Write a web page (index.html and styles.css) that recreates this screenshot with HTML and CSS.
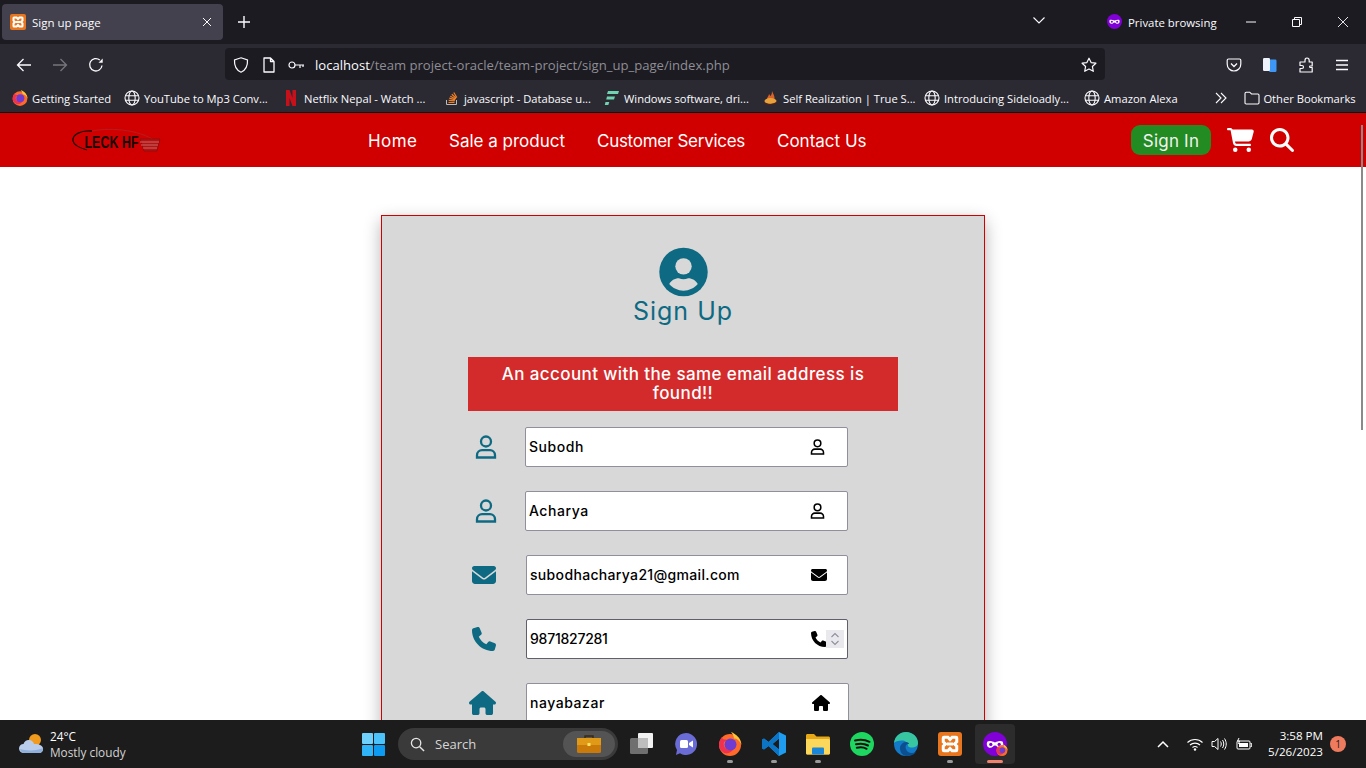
FILE: index.html
```html
<!DOCTYPE html>
<html lang="en">
<head>
<meta charset="utf-8">
<title>Sign up page</title>
<link rel="stylesheet" href="styles.css">
</head>
<body>
<svg class="defs" aria-hidden="true">
  <symbol id="xampp" viewBox="0 0 16 16"><rect width="16" height="16" rx="2" fill="#e8761f"/><path d="M4 3.500h2.600L8 5l1.400-1.500H12a.5.5 0 0 1 .5.5v2.600L11 8l1.500 1.400V12a.5.5 0 0 1-.5.5H9.400L8 11l-1.400 1.500H4a.5.5 0 0 1-.5-.5V9.400L5 8 3.500 6.600V4a.5.5 0 0 1 .5-.5zM6 8h4" fill="none" stroke="#fff" stroke-width="2"/></symbol>
  <symbol id="globe" viewBox="0 0 16 16"><g fill="none" stroke="#fbfbfe" stroke-width="1.100"><circle cx="8" cy="8" r="7"/><ellipse cx="8" cy="8" rx="3.200" ry="7"/><path d="M1.300 5.800h13.400M1.300 10.200h13.400"/></g></symbol>
  <symbol id="firefox" viewBox="0 0 24 24"><circle cx="12" cy="13" r="11" fill="#ff6a2b"/><path d="M13 0c5 2 10 6 10.500 13-2-5-5-6.500-7.500-6.500C16 4 14.500 2 13 0z" fill="#ffc33a"/><path d="M1 13c0-3 1-6 3-8 0 3 3 2 5 3-3 1-4 3-3 6 1 4 7 5 10 2-2 5-8 7-11 4-3-2-4-4-4-7z" fill="#f0324f"/><circle cx="12.500" cy="12.500" r="6" fill="#6f3bd1"/></symbol>
  <symbol id="mask" viewBox="0 0 16 16"><circle cx="8" cy="8" r="8" fill="#8000d7"/><path d="M2.800 6.500c1.400-.8 3-.4 5.200.5 2.200-.9 3.800-1.300 5.200-.5 .8 2.200-.2 4-2 4-1.500 0-2-1.500-3.200-1.500S6.300 10.500 4.800 10.500c-1.800 0-2.800-1.800-2-4z" fill="#fff"/><circle cx="5.200" cy="8.300" r="1.100" fill="#8000d7"/><circle cx="10.800" cy="8.300" r="1.100" fill="#8000d7"/></symbol>
  <symbol id="user-o" viewBox="0 0 22 24"><g fill="none" stroke="currentColor" stroke-width="2.300"><circle cx="11" cy="6.500" r="5"/><path d="M2 22.500v-2.300c0-3 2.500-5 5-5h8c2.500 0 5 2 5 5v2.300z"/></g></symbol>
  <symbol id="envelope" viewBox="0 0 512 512"><path fill="currentColor" d="M48 64C21.500 64 0 85.500 0 112c0 15.100 7.100 29.300 19.200 38.400L236.800 313.600c11.400 8.500 27 8.500 38.400 0L492.800 150.400c12.100-9.100 19.200-23.300 19.200-38.400c0-26.500-21.500-48-48-48H48zM0 176V384c0 35.300 28.700 64 64 64H448c35.300 0 64-28.700 64-64V176L294.400 339.200c-22.800 17.100-54 17.100-76.800 0L0 176z"/></symbol>
  <symbol id="phone" viewBox="0 0 512 512"><path fill="currentColor" d="M164.900 24.600c-7.700-18.600-28-28.500-47.400-23.200l-88 24C12.100 30.200 0 46 0 64C0 311.400 200.600 512 448 512c18 0 33.800-12.100 38.600-29.500l24-88c5.300-19.400-4.600-39.700-23.200-47.400l-96-40c-16.300-6.800-35.200-2.100-46.300 11.600L304.700 368C234.300 334.700 177.300 277.700 144 207.300L193.300 167c13.700-11.200 18.400-30 11.600-46.300l-40-96z"/></symbol>
  <symbol id="home" viewBox="0 0 576 512"><path fill="currentColor" d="M575.800 255.500c0 18-15 32.100-32 32.100h-32l.7 160.200c0 2.700-.2 5.400-.5 8.100V472c0 22.100-17.900 40-40 40H456c-1.100 0-2.200 0-3.300-.1c-1.400 .1-2.800 .1-4.200 .1H416 392c-22.100 0-40-17.900-40-40V448 384c0-17.700-14.300-32-32-32H256c-17.700 0-32 14.300-32 32v64 24c0 22.100-17.900 40-40 40H160 128.100c-1.500 0-3-.1-4.500-.2c-1.200 .1-2.400 .2-3.600 .2H104c-22.100 0-40-17.900-40-40V360c0-.9 0-1.900 .1-2.800V287.600H32c-18 0-32-14-32-32.100c0-9 3-17 10-24L266.400 8c7-7 15-8 22-8s15 2 21 7L564.800 231.500c8 7 12 15 11 24z"/></symbol>
</svg>

<header class="chrome">
  <div class="tabbar">
    <div class="tab">
      <svg class="ic16"><use href="#xampp"/></svg>
      <span class="tab-title">Sign up page</span>
      <svg class="tab-close" viewBox="0 0 10 10"><path d="M1 1l8 8M9 1l-8 8" stroke="#fbfbfe" fill="none"/></svg>
    </div>
    <svg class="tab-new" viewBox="0 0 12 12"><path d="M6 0v12M0 6h12" stroke="#fbfbfe" stroke-width="1.400"/></svg>
    <svg class="tab-list" viewBox="0 0 12 7"><path d="M.5.500L6 6 11.500.500" stroke="#fbfbfe" stroke-width="1.100" fill="none"/></svg>
    <svg class="ic16 priv-ic"><use href="#mask"/></svg>
    <span class="priv-label">Private browsing</span>
    <svg class="win-btn win-min" viewBox="0 0 10 10"><path d="M0 5h10" stroke="#fbfbfe"/></svg>
    <svg class="win-btn win-max" viewBox="0 0 10 10"><path d="M.5 2.500h7v7h-7zM2.500 2.500v-2h7v7h-2" stroke="#fbfbfe" fill="none"/></svg>
    <svg class="win-btn win-close" viewBox="0 0 10 10"><path d="M0 0l10 10M10 0L0 10" stroke="#fbfbfe" stroke-width=".9"/></svg>
  </div>
  <div class="toolbar">
    <svg class="tool tool-back" viewBox="0 0 16 16"><path d="M15 8H1.500M7.500 2l-6 6 6 6" stroke="#fbfbfe" stroke-width="1.300" fill="none"/></svg>
    <svg class="tool tool-fwd" viewBox="0 0 16 16"><path d="M1 8h13.500M8.500 2l6 6-6 6" stroke="#76757c" stroke-width="1.300" fill="none"/></svg>
    <svg class="tool tool-reload" viewBox="0 0 16 16"><path d="M14 8.500A6.200 6.200 0 1 1 11.800 3" stroke="#fbfbfe" stroke-width="1.300" fill="none"/><path d="M10.500 5.800h4.200V1.500z" fill="#fbfbfe"/></svg>
    <div class="urlbar">
      <svg class="ic16" viewBox="0 0 16 16"><path d="M8 .8l6.500 2.200c.3 5.500-1.500 10-6.500 12.200C3 13 1.200 8.500 1.500 3z" fill="none" stroke="#fbfbfe" stroke-width="1.200"/></svg>
      <svg class="ic16 url-doc" viewBox="0 0 16 16"><path d="M3 1h6.500L13 4.500V15H3zM9.500 1v3.500H13" fill="none" stroke="#fbfbfe" stroke-width="1.300" stroke-linejoin="round"/></svg>
      <svg class="ic16 url-key" viewBox="0 0 16 16"><circle cx="4" cy="8" r="3" fill="none" stroke="#fbfbfe" stroke-width="1.200"/><path d="M7 8h9M12 8v3M15 8v2" stroke="#fbfbfe" stroke-width="1.200" fill="none"/></svg>
      <span class="url"><span class="url-host">localhost</span>/team project-oracle/team-project/sign_up_page/index.php</span>
      <svg class="ic16 url-star" viewBox="0 0 16 16"><path d="M8 1.200l2.100 4.400 4.800.6-3.500 3.300.9 4.800L8 12l-4.300 2.300.9-4.800L1.100 6.200l4.800-.6z" fill="none" stroke="#fbfbfe" stroke-width="1.200" stroke-linejoin="round"/></svg>
    </div>
    <div class="tool-right">
      <svg class="ic16" viewBox="0 0 16 16"><path d="M2.500 2h11c.8 0 1.300.6 1.300 1.300V7c0 4-3 7-6.800 7S1.200 11 1.200 7V3.300C1.200 2.600 1.700 2 2.500 2z" fill="none" stroke="#fbfbfe" stroke-width="1.200"/><path d="M5 6.500L8 9.500l3-3" fill="none" stroke="#fbfbfe" stroke-width="1.300"/></svg>
      <svg class="ic16" viewBox="0 0 16 16"><rect x="7" y="2.500" width="7.500" height="12.500" rx="1.200" fill="#3f97f5"/><rect x="1" y="1" width="7" height="13" rx="1.200" fill="#eef3fb"/></svg>
      <svg class="ic16" viewBox="0 0 16 16"><path d="M9 1c1.500 0 2.200 1 2.200 2.500V5h3v4h-2c-.8 0-.8 1.500 0 1.500h2V15H2v-3.500h2c1 0 1.500-.7 1.500-1.500S5 8.500 4 8.500H2V5h5V3.500C7 2 7.500 1 9 1z" fill="none" stroke="#fbfbfe" stroke-width="1.200" stroke-linejoin="round"/></svg>
      <svg class="ic16" viewBox="0 0 16 16"><path d="M2 3.500h12M2 8h12M2 12.500h12" stroke="#fbfbfe" stroke-width="1.300"/></svg>
    </div>
  </div>
  <nav class="bookmarks">
    <a class="bm"><svg class="ic16"><use href="#firefox"/></svg>Getting Started</a>
    <a class="bm"><svg class="ic16"><use href="#globe"/></svg>YouTube to Mp3 Conv...</a>
    <a class="bm"><svg class="ic-bm-n" viewBox="0 0 10 16"><path d="M0 0h3.500l3 8V0H10v16H6.500l-3-8v8H0z" fill="#c8101a"/></svg>Netflix Nepal - Watch ...</a>
    <a class="bm"><svg class="ic16" viewBox="0 0 16 16"><path d="M2.500 10v4.500h10V10" fill="none" stroke="#bcbbbb"/><path d="M4.500 12.500h6M4.700 10.300l6 .6M5.300 8.200l5.800 1.600M6.300 6.200l5.300 2.800M7.800 4.200l4.400 4M9.800 2.500l3 5" stroke="#f48024" stroke-width="1.200"/></svg>javascript - Database u...</a>
    <a class="bm"><svg class="ic16" viewBox="0 0 16 16"><path d="M4 1h11l-1 3H3zM3 6.500h8l-1 3H2.200zM1.500 12h3.800l-1 3H.8z" fill="#6fd3b0"/></svg>Windows software, dri...</a>
    <a class="bm"><svg class="ic16" viewBox="0 0 16 16"><path d="M9 1c1 3 3 5 2.500 8H4c0-2 2-3 2-5 1 1 1 2 1.500 2C8.500 5 9 3 9 1z" fill="#d9622a"/><ellipse cx="7.500" cy="11" rx="6" ry="3" fill="#e9a23b"/><path d="M1 13c3 2 9 2 13-1" stroke="#5c1f14" fill="none"/></svg>Self Realization | True S...</a>
    <a class="bm"><svg class="ic16"><use href="#globe"/></svg>Introducing Sideloadly...</a>
    <a class="bm"><svg class="ic16"><use href="#globe"/></svg>Amazon Alexa</a>
    <svg class="bm-more" viewBox="0 0 12 12"><path d="M1 1l5 5-5 5M6 1l5 5-5 5" fill="none" stroke="#fbfbfe" stroke-width="1.100"/></svg>
    <a class="bm bm-other"><svg class="ic16" viewBox="0 0 16 16"><path d="M1 3.500c0-.8.500-1.300 1.200-1.300h3.500L7.500 4h6.300c.7 0 1.200.5 1.200 1.200v7.600c0 .7-.5 1.200-1.200 1.200H2.200C1.500 14 1 13.500 1 12.800z" fill="none" stroke="#fbfbfe" stroke-width="1.100"/></svg>Other Bookmarks</a>
  </nav>
</header>

<div class="page">
  <div class="scroll-thumb"></div>
  <nav class="sitenav">
    <svg class="logo" viewBox="0 0 88 28">
      <path d="M20 5C8 4 0 9 1 15c.7 4 7 7 14 9" fill="none" stroke="#180606" stroke-width="1.300"/>
      <path d="M20 5c20-4 52-1 67 13" fill="none" stroke="#b71c1c" stroke-width="1"/>
      <text class="logo-text" x="12.500" y="21.500" textLength="54" lengthAdjust="spacingAndGlyphs">LECK HF</text>
      <path d="M68 13h20l-3 12H72z" fill="#b01414" stroke="#7d0c0c" stroke-width=".6"/>
      <path d="M68 16h19M69 19h17M71 22h14" stroke="#e0a0a0" stroke-width=".6"/>
    </svg>
    <ul class="links">
      <li class="link-home"><a>Home</a></li>
      <li class="link-sale"><a>Sale a product</a></li>
      <li class="link-cust"><a>Customer Services</a></li>
      <li class="link-cont"><a>Contact Us</a></li>
    </ul>
    <div class="nav-actions">
      <a class="signin">Sign In</a>
      <svg class="cart" viewBox="0 0 576 512"><path fill="#fff" d="M0 24C0 10.700 10.700 0 24 0H69.500c22 0 41.500 12.800 50.600 32h411c26.300 0 45.500 25 38.600 50.400l-41 152.300c-8.500 31.400-37 53.300-69.500 53.300H170.700l5.400 28.500c2.200 11.300 12.100 19.500 23.600 19.500H488c13.300 0 24 10.700 24 24s-10.700 24-24 24H199.700c-34.600 0-64.300-24.600-70.700-58.500L77.400 54.500c-.7-3.800-4-6.500-7.900-6.500H24C10.700 48 0 37.300 0 24zM128 464a48 48 0 1 1 96 0 48 48 0 1 1 -96 0zm336-48a48 48 0 1 1 0 96 48 48 0 1 1 0-96z"/></svg>
      <svg class="search" viewBox="0 0 512 512"><path fill="#fff" d="M416 208c0 45.900-14.900 88.300-40 122.700L502.600 457.400c12.500 12.500 12.500 32.800 0 45.300s-32.800 12.500-45.300 0L330.700 376c-34.400 25.200-76.800 40-122.700 40C93.100 416 0 322.900 0 208S93.100 0 208 0S416 93.100 416 208zM208 352a144 144 0 1 0 0-288 144 144 0 1 0 0 288z"/></svg>
    </div>
  </nav>
  <main class="main">
    <section class="card">
      <svg class="avatar" viewBox="0 0 496 512"><circle cx="248" cy="256" r="248" fill="#0e6a82"/><circle cx="248" cy="198" r="84" fill="#d8d8d8"/><path d="M102 380c18-36 56-60 98-60 18 6 32 9 48 9s30-3 48-9c42 0 80 24 98 60-36 42-88 68-146 68s-110-26-146-68z" fill="#d8d8d8"/></svg>
      <h1 class="title">Sign Up</h1>
      <div class="alert">An account with the same email address is found!!</div>
      <form class="form">
        <div class="row">
          <svg class="lead lead-user"><use href="#user-o"/></svg>
          <div class="field"><input class="input" type="text" value="Subodh"><svg class="inner inner-user"><use href="#user-o"/></svg></div>
        </div>
        <div class="row">
          <svg class="lead lead-user"><use href="#user-o"/></svg>
          <div class="field"><input class="input" type="text" value="Acharya"><svg class="inner inner-user"><use href="#user-o"/></svg></div>
        </div>
        <div class="row row-b">
          <svg class="lead lead-mail"><use href="#envelope"/></svg>
          <div class="field"><input class="input input-mail" type="email" value="subodhacharya21@gmail.com"><svg class="inner inner-mail"><use href="#envelope"/></svg></div>
        </div>
        <div class="row row-b">
          <svg class="lead lead-mail"><use href="#phone"/></svg>
          <div class="field"><input class="input input-num" type="text" value="9871827281"><svg class="inner inner-mail"><use href="#phone"/></svg>
            <span class="spin"><svg viewBox="0 0 10 16"><path d="M1.500 6L5 2.500 8.500 6M1.500 10L5 13.500 8.500 10" fill="none" stroke="#8f8f9d" stroke-width="1.100"/></svg></span>
          </div>
        </div>
        <div class="row row-c">
          <svg class="lead lead-home"><use href="#home"/></svg>
          <div class="field"><input class="input" type="text" value="nayabazar"><svg class="inner inner-home"><use href="#home"/></svg></div>
        </div>
      </form>
    </section>
  </main>
</div>

<footer class="taskbar">
  <div class="weather">
    <svg class="weather-ic" viewBox="0 0 26 22"><circle cx="17" cy="7" r="6" fill="#f09a1e"/><path d="M6 20c-3 0-5-2-5-4.500S3 11 5.500 11C6.500 8 9 6.500 11.500 7c2.500.5 4 2 4.500 4 3-.5 8 .5 9 4 .5 3-1.500 5-4 5z" fill="#b9cdea"/><path d="M2 16c5 2 18 2 23-1 .2 3-1.500 5-4 5H6c-2 0-3.500-2-4-4z" fill="#8fb0dc"/></svg>
    <div class="weather-text"><span class="temp">24°C</span><span class="cond">Mostly cloudy</span></div>
  </div>
  <svg class="start" viewBox="0 0 23 23"><rect width="11" height="11" rx="1" fill="#6fd0fb"/><rect x="12" width="11" height="11" rx="1" fill="#4cc2fa"/><rect y="12" width="11" height="11" rx="1" fill="#2fb4f8"/><rect x="12" y="12" width="11" height="11" rx="1" fill="#0d9bf2"/></svg>
  <div class="searchbox">
    <svg class="search-ic" viewBox="0 0 16 16"><circle cx="6.500" cy="6.500" r="5" fill="none" stroke="#e6e6e6" stroke-width="1.400"/><path d="M10.300 10.300L15 15" stroke="#e6e6e6" stroke-width="1.500"/></svg>
    <span class="search-label">Search</span>
    <span class="search-pill"><svg class="brief" viewBox="0 0 24 18"><path d="M8 3V1h8v2" fill="none" stroke="#3a2a10" stroke-width="1.400"/><rect y="3" width="24" height="15" rx="1.500" fill="#c97a08"/><rect y="3" width="24" height="7" fill="#e09a18"/><rect x="10.500" y="8" width="3" height="3" fill="#ffe060"/></svg></span>
  </div>
  <div class="apps">
    <span class="app"><svg class="app-ic" viewBox="0 0 24 24"><rect x="0" y="6" width="18" height="16" rx="1.500" fill="#6f6f6f"/><rect x="8" y="1" width="15" height="15" rx="1" fill="#f2f2f2"/><rect x="8" y="6" width="10" height="10" fill="#bdbdbd"/></svg></span>
    <span class="app"><svg class="app-ic" viewBox="0 0 24 24"><path d="M12 1a11 11 0 1 1-6 20.200L2 23l1-5A11 11 0 0 1 12 1z" fill="#6b6bd6"/><rect x="6" y="8" width="8" height="8" rx="1.500" fill="#fff"/><path d="M15 11l4-2.500v7L15 13z" fill="#fff"/></svg></span>
    <span class="app app-on"><svg class="app-ic"><use href="#firefox"/></svg></span>
    <span class="app app-on"><svg class="app-ic" viewBox="0 0 24 24"><path d="M17 0l7 3.400v17.200L17 24 6.500 14 2 17.500 0 16.300V7.700l2-1.200L6.500 10zM17 6.500L10.500 12l6.500 5.500z" fill="#1f9cf0"/><path d="M17 0L6.500 10 2 6.500 0 7.700v8.600l2 1.200L6.500 14 17 24v-6.500L10.500 12 17 6.500z" fill="#0b74c4"/></svg></span>
    <span class="app app-on"><svg class="app-ic" viewBox="0 0 24 24"><path d="M0 3.500C0 2.700.6 2 1.500 2H8l2.500 2.500h12c.8 0 1.500.7 1.500 1.500v15c0 .8-.7 1.500-1.500 1.500h-21C.6 22.500 0 21.800 0 21z" fill="#e6a817"/><path d="M0 7h22.500c.8 0 1.500.7 1.500 1.500V21c0 .8-.7 1.500-1.500 1.500h-21C.6 22.500 0 21.800 0 21z" fill="#fbd75b"/><rect x="6" y="15.500" width="12" height="7" rx="1" fill="#1a86d8"/></svg></span>
    <span class="app"><svg class="app-ic" viewBox="0 0 24 24"><circle cx="12" cy="12" r="12" fill="#1ed760"/><path d="M5 8.500c5-1.300 10-1 14.500 1.300M6 12.300c4.300-1 8.500-.7 12 1.200M6.800 15.800c3.500-.8 7-.6 9.800 1" fill="none" stroke="#111" stroke-width="2" stroke-linecap="round"/></svg></span>
    <span class="app"><svg class="app-ic" viewBox="0 0 24 24"><circle cx="12" cy="12" r="12" fill="#1379c9"/><path d="M0 11C1 4 6 0 12 0c7 0 12 5 12 11 0 3-3 4.500-6 4.500-2.500 0-4-.5-4-2 0-3-3-5-6-5-4 0-7 1-8 2.500z" fill="#37c6a0"/><path d="M12 24c-4-1-6-4-6-8 0-3 3-6 6-6 2 0 3 1 3 2-3 0-4 2-3 5 1 4 6 5 10 3-2 3-6 4-10 4z" fill="#0c4f8f"/></svg></span>
    <span class="app app-on"><svg class="app-ic"><use href="#xampp"/></svg></span>
    <span class="app-active"><svg class="app-ic"><use href="#mask"/></svg><svg class="app-badge"><use href="#firefox"/></svg><i class="app-line"></i></span>
  </div>
  <div class="tray">
    <svg class="tray-ic tray-up" viewBox="0 0 12 8"><path d="M1 7l5-5 5 5" fill="none" stroke="#fff" stroke-width="1.500"/></svg>
    <svg class="tray-ic tray-wifi" viewBox="0 0 16 13"><path d="M.5 4.500c4-4 11-4 15 0M3 7c2.800-2.500 7.200-2.500 10 0M5.500 9.500c1.500-1.200 3.500-1.200 5 0" fill="none" stroke="#fff" stroke-width="1.100"/><circle cx="8" cy="11.500" r="1.200" fill="#fff"/></svg>
    <svg class="tray-ic tray-vol" viewBox="0 0 16 14"><path d="M1 4.500h2.500L7 1.500v11l-3.500-3H1zM9.500 4.500c1 1.500 1 3.500 0 5M11.500 3c1.700 2.500 1.700 5.500 0 8M13.500 1.500c2.300 3.500 2.300 7.500 0 11" fill="none" stroke="#fff" stroke-width="1"/></svg>
    <svg class="tray-ic tray-bat" viewBox="0 0 16 12"><rect x="1" y="3" width="13" height="8" rx="1" fill="none" stroke="#fff"/><rect x="3" y="5" width="9" height="4" fill="#fff"/><path d="M14.500 5.500h1.200v3h-1.200M3 0L1.500 3h2L2.500 6" fill="none" stroke="#fff"/></svg>
    <div class="clock"><span>3:58 PM</span><span>5/26/2023</span></div>
    <span class="notif">1</span>
  </div>
</footer>
</body>
</html>
```

FILE: styles.css
```css
* { box-sizing: border-box; }
html, body { margin: 0; padding: 0; }
body {
  width: 1366px;
  height: 768px;
  overflow: hidden;
  display: flex;
  flex-direction: column;
  font-family: "Open Sans", "Noto Sans", sans-serif;
  background: #fff;
}
.defs { position: absolute; width: 0; height: 0; }
.ic16 { width: 16px; height: 16px; flex: none; display: block; }

/* browser chrome */
.chrome { flex: none; color: #fbfbfe; font-size: 12px; }
.tabbar {
  height: 44px;
  background: #1c1b22;
  display: flex;
  align-items: center;
  padding-left: 2px;
}
.tab {
  width: 221px;
  height: 36px;
  background: #42414d;
  border-radius: 4px;
  display: flex;
  align-items: center;
  padding: 0 11px 0 8px;
}
.tab-title { flex: 1; margin-left: 6px; font-size: 11.5px; }
.tab-close { width: 10px; height: 10px; }
.tab-new { width: 12px; height: 12px; margin-left: 15px; }
.tab-list { width: 12px; height: 7px; margin-left: 783px; margin-top: -3px; }
.priv-ic { margin-left: 62px; margin-top: -1px; width: 15px; height: 15px; }
.priv-label { margin-left: 6px; width: 93px; white-space: nowrap; font-size: 11.4px; }
.win-btn { width: 10px; height: 10px; }
.win-min { margin-left: 25px; }
.win-max { margin-left: 36px; }
.win-close { margin-left: 36px; }

.toolbar {
  height: 44px;
  background: #2b2a33;
  display: flex;
  align-items: center;
  padding-bottom: 4px;
}
.tool { width: 16px; height: 16px; flex: none; margin-top: 2px; }
.tool-back { margin-left: 16px; }
.tool-fwd { margin-left: 20px; }
.tool-reload { margin-left: 20px; }
.urlbar {
  width: 880px;
  height: 32px;
  margin-left: 121px;
  padding: 1px 8px 0;
  background: #1c1b22;
  border-radius: 4px;
  display: flex;
  align-items: center;
}
.url-doc { margin-left: 12px; }
.url-key { margin-left: 11px; }
.url { margin-left: 11px; flex: 1; font-size: 13.1px; color: #8f8e94; white-space: nowrap; }
.url-host { color: #fbfbfe; }
.tool-right { display: flex; gap: 20px; margin-left: 121px; margin-top: 2px; }

.bookmarks {
  height: 24px;
  background: #2b2a33;
  display: grid;
  grid-template-columns: 112px 161px 159px 160px 159px 161px 160px 131px auto auto;
  align-items: center;
  padding-left: 12px;
  padding-bottom: 4px;
}
.bm { display: flex; align-items: center; gap: 4px; white-space: nowrap; font-size: 11.2px; }
.ic-bm-n { width: 10px; height: 16px; margin: 0 4px 0 1px; }
.bm-more { width: 12px; height: 12px; }
.bm-other { margin-left: 7px; gap: 3px; }

/* page */
.page {
  flex: 1;
  min-height: 0;
  position: relative;
  overflow: hidden;
  border-top: 1px solid #0c0c0d;
  font-family: Inter, "Open Sans", sans-serif;
}
.scroll-thumb {
  position: absolute;
  right: 3px;
  top: 12px;
  width: 2px;
  height: 305px;
  background: #8a8a8a;
  z-index: 2;
}
.sitenav {
  height: 54px;
  background: #d10000;
  display: flex;
  align-items: center;
  padding: 0 72px;
}
.logo { width: 88px; height: 28px; flex: none; overflow: visible; }
.logo-text { font-family: "Liberation Sans", sans-serif; font-size: 16px; font-weight: 700; fill: #150404; }
.links {
  list-style: none;
  display: flex;
  gap: 32px;
  margin: 2px 0 0 208px;
  padding: 0;
  color: #fff;
  font-size: 17px;
  white-space: nowrap;
}
.link-home { width: 49px; letter-spacing: .45px; }
.link-sale { width: 116px; }
.link-cust { width: 148px; letter-spacing: -.28px; }
.link-cont { width: 89px; }
.nav-actions { margin-left: auto; display: flex; align-items: center; }
.signin {
  width: 80px;
  height: 30px;
  padding-top: 1px;
  background: #228b22;
  border-radius: 9px;
  color: #f2f2f2;
  font-size: 17px;
  letter-spacing: .2px;
  display: flex;
  align-items: center;
  justify-content: center;
}
.cart { width: 27px; height: 24px; margin-left: 16px; }
.search { width: 24px; height: 24px; margin-left: 16px; }

.main { padding-top: 48px; }
.card {
  width: 604px;
  height: 700px;
  margin: 0 auto;
  background: #d8d8d8;
  border: 1px solid #d10000;
  box-shadow: 0 6px 16px rgba(0, 0, 0, .3);
  padding: 31px 86px 0;
  display: flex;
  flex-direction: column;
  align-items: center;
}
.avatar { width: 49px; height: 50px; flex: none; }
.title {
  margin: 0;
  font-size: 25px;
  line-height: 28px;
  font-weight: 400;
  color: #0e6a82;
  letter-spacing: 1px;
}
.alert {
  width: 430px;
  height: 54px;
  margin-top: 32px;
  padding: 8px 30px;
  background: #d32b2b;
  color: #fff;
  font-size: 17px;
  font-weight: 550;
  letter-spacing: .4px;
  line-height: 19px;
  text-align: center;
}
.form { width: 430px; margin-top: 16px; display: flex; flex-direction: column; gap: 24px; }
.row { display: flex; align-items: center; height: 40px; }
.lead { color: #0e6a82; flex: none; }
.lead-user { width: 22px; height: 24px; margin-left: 7px; margin-right: 28px; }
.lead-mail { width: 24px; height: 24px; margin-left: 4px; margin-right: 30px; }
.lead-home { width: 27px; height: 24px; margin-left: 1px; margin-right: 30px; }
.field { position: relative; width: 323px; height: 40px; flex: none; }
.row-b .field { width: 322px; }
.input {
  width: 100%;
  height: 100%;
  padding: 0 3px 1px;
  border: 1px solid #8f8f9d;
  border-radius: 2px;
  background: #fff;
  color: #000;
  font-family: Inter, "Open Sans", sans-serif;
  font-size: 14px;
  font-weight: 550;
  letter-spacing: .55px;
  outline: none;
}
.input-mail { letter-spacing: .33px; }
.input-num { border-color: #60606c; letter-spacing: -.25px; }
.inner { position: absolute; top: 50%; color: #000; pointer-events: none; }
.inner-user { right: 23px; width: 15px; height: 16px; margin-top: -8px; }
.inner-mail { right: 21px; width: 16px; height: 16px; margin-top: -8px; }
.inner-home { right: 19px; width: 18px; height: 16px; margin-top: -8px; }
.spin {
  position: absolute;
  right: 4px;
  top: 11px;
  width: 18px;
  height: 18px;
  background: #e9e9ed;
  display: flex;
  align-items: center;
  justify-content: center;
}
.spin svg { width: 10px; height: 16px; }

/* taskbar */
.taskbar {
  flex: none;
  height: 48px;
  background: #1c1c1c;
  display: flex;
  align-items: center;
  color: #fff;
  font-family: "Open Sans", sans-serif;
  font-size: 12px;
  position: relative;
}
.weather { display: flex; align-items: center; width: 362px; padding-left: 18px; }
.weather-ic { width: 26px; height: 22px; }
.weather-text { display: flex; flex-direction: column; margin-left: 6px; line-height: 16px; font-size: 11.8px; }
.cond { color: #d4d4d4; }
.start { width: 23px; height: 23px; flex: none; }
.searchbox {
  width: 220px;
  height: 32px;
  margin-left: 13px;
  background: #3a3a3a;
  border-radius: 16px;
  display: flex;
  align-items: center;
  padding-left: 12px;
  flex: none;
}
.search-ic { width: 15px; height: 15px; }
.search-label { margin-left: 10px; font-size: 13px; color: #d6d6d6; flex: 1; }
.search-pill {
  width: 52px;
  height: 26px;
  margin-right: 3px;
  border-radius: 13px;
  background: #545454;
  display: flex;
  align-items: center;
  justify-content: center;
}
.brief { width: 24px; height: 18px; }
.apps { display: flex; align-items: center; gap: 20px; margin-left: 12px; }
.app { position: relative; width: 24px; height: 24px; flex: none; }
.app-ic { width: 24px; height: 24px; display: block; }
.app-on::after {
  content: "";
  position: absolute;
  left: 9px;
  top: 28px;
  width: 6px;
  height: 3px;
  border-radius: 2px;
  background: #9a9a9a;
}
.app-active {
  position: relative;
  width: 40px;
  height: 40px;
  margin-left: -7px;
  background: #2c2c2c;
  border-radius: 4px;
  display: flex;
  align-items: center;
  justify-content: center;
}
.app-badge { position: absolute; right: 7px; top: 20px; width: 12px; height: 12px; }
.app-line {
  position: absolute;
  left: 12px;
  bottom: 1px;
  width: 16px;
  height: 3px;
  border-radius: 2px;
  background: #f0826e;
}
.tray { position: absolute; left: 1157px; right: 0; top: 0; height: 48px; display: flex; align-items: center; }
.tray-ic { flex: none; }
.tray-up { width: 12px; height: 8px; }
.tray-wifi { width: 16px; height: 13px; margin-left: 18px; }
.tray-vol { width: 16px; height: 14px; margin-left: 8px; }
.tray-bat { width: 16px; height: 12px; margin-left: 9px; }
.clock {
  width: 61px;
  margin-left: 10px;
  display: flex;
  flex-direction: column;
  align-items: flex-end;
  line-height: 16px;
  font-size: 11.6px;
  white-space: nowrap;
}
.notif {
  width: 16px;
  height: 16px;
  margin-left: 7px;
  border-radius: 50%;
  background: #ef7b5f;
  color: #1c1c1c;
  font-size: 10px;
  display: flex;
  align-items: center;
  justify-content: center;
}
```
